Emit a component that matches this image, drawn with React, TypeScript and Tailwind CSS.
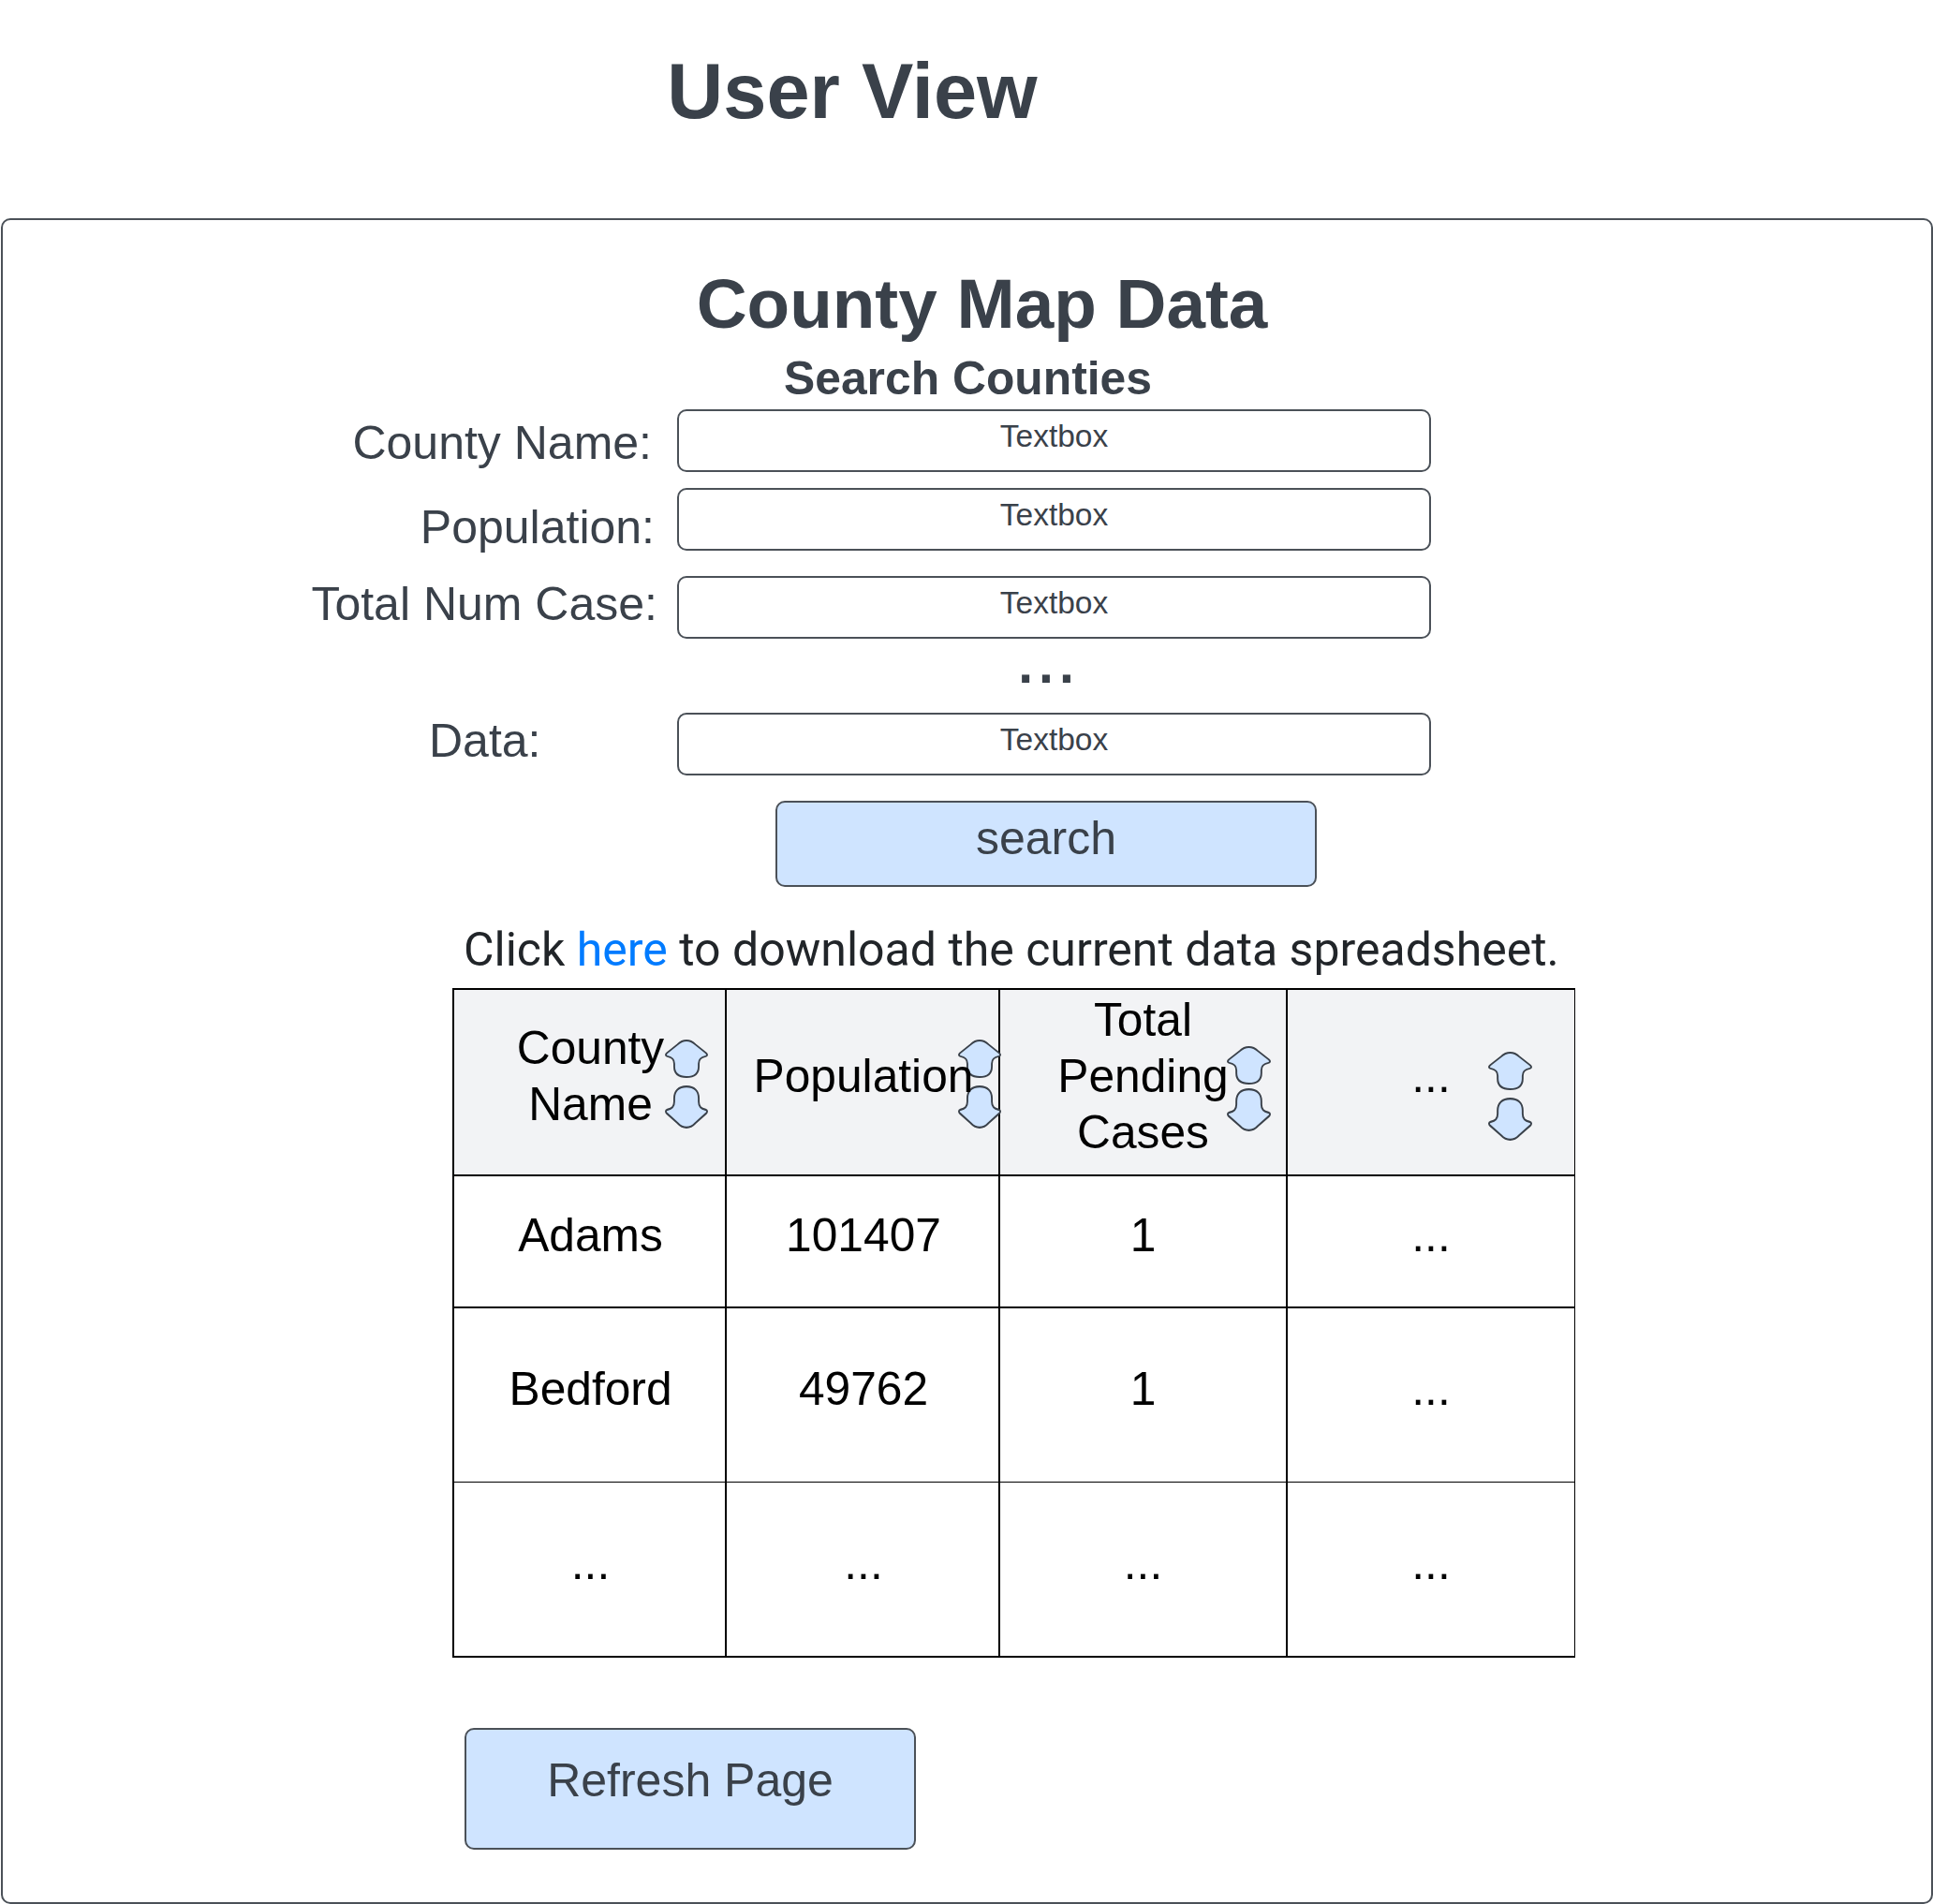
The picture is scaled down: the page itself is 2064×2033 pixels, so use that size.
import React from 'react';

// arrow shape used in the sort controls of the table header
function SortArrow({ down = false, className = '' }: { down?: boolean; className?: string }) {
  return (
    <svg
      viewBox="0 0 44 40"
      preserveAspectRatio="none"
      className={`absolute ${down ? '-scale-y-100' : ''} ${className}`}
    >
      <path
        d="M22 1C26 1 29 3 31 5L42 14C43.5 15.5 43.5 17 41.5 17.5C37 18.5 34.5 20 34.5 25V28C34.5 35 30 39 22 39C14 39 9.5 35 9.5 28V25C9.5 20 7 18.5 2.5 17.5C.5 17 .5 15.5 2 14L13 5C15 3 18 1 22 1Z"
        fill="#cfe4ff"
        stroke="#3a414a"
        strokeWidth="1.8"
      />
    </svg>
  );
}

function Field({ label, labelClass }: { label: string; labelClass: string }) {
  return (
    <div className="flex items-start h-[67px]">
      <div className={`w-[720px] shrink-0 text-[50px] leading-[60px] text-[#3a414a] ${labelClass}`}>{label}</div>
      <div className="w-[805px] h-[67px] box-border border-2 border-[#4b5158] rounded-[10px] bg-white text-center text-[33.5px] leading-[53px] text-[#3a414a]">
        Textbox
      </div>
    </div>
  );
}

const rows = [
  { h: 'h-[141px]', cells: ['Adams', '101407', '1', '...'], border: 'border-b-2' },
  { h: 'h-[186px]', cells: ['Bedford', '49762', '1', '...'], border: 'border-b' },
  { h: 'h-[187px]', cells: ['...', '...', '...', '...'], border: 'border-b-2' },
];

const colW = ['w-[291px]', 'w-[292px]', 'w-[307px]', 'w-[306px]'];

export default function App() {
  return (
    <div className="w-[2064px] h-[2033px] overflow-hidden bg-white font-['Liberation_Sans',sans-serif]">
      <div className="h-[233px] pl-[32px] pt-[45px]">
        <h1 className="w-[1756px] text-center text-[83px] leading-[106px] font-bold text-[#3a414a]">User View</h1>
      </div>

      <div className="ml-px w-[2063px] h-[1800px] box-border border-2 border-[#4b5158] rounded-[10px]">
        <h2 className="pl-[32px] pt-[39px] text-center text-[74.67px] leading-[100px] font-bold text-[#3a414a]">County Map Data</h2>
        <h3 className="pl-[2px] text-center text-[49.8px] leading-[60px] font-bold text-[#3a414a]">Search Counties</h3>

        <div className="mt-[3px]">
          <Field label="County Name:" labelClass="pr-[27px] text-right pt-[6px]" />
          <div className="h-[17px]" />
          <Field label="Population:" labelClass="pr-[24px] text-right pt-[12px]" />
          <div className="h-[27px]" />
          <Field label="Total Num Case:" labelClass="pr-[21px] text-right" />
          <div className="h-[79px] pl-[720px]">
            <div className="w-[794px] text-center text-[57px] leading-[54px] font-bold text-[#3a414a] tracking-[6px]">...</div>
          </div>
          <Field label="Data:" labelClass="pl-[455px]" />
        </div>

        <button className="block mt-[27px] ml-[825px] w-[578px] h-[92px] box-border border-2 border-[#4b5158] rounded-[10px] bg-[#cfe4ff] text-[50px] leading-[74px] pb-[12px] text-[#3a414a]">
          search
        </button>

        <p className="mt-[35px] mb-[9px] ml-[492px] h-[64px] font-['Roboto',sans-serif] text-[50px] leading-[64px] text-[#212529] whitespace-nowrap">
          Click <span className="text-[#007bff]">here</span> to download the current data spreadsheet.
        </p>

        <div className="ml-[480px] w-[1199px] border-t-2 border-l-2 border-r border-black text-[49.7px] leading-[60px] text-black text-center">
          <div className="flex h-[199px] bg-[#f2f3f5] border-b-2 border-black">
            <div className={`${colW[0]} relative border-r-2 border-black pt-[32px] pl-[2px]`}>
              <SortArrow className="left-[225px] top-[53px] w-[46px] h-[41px]" />
              <SortArrow down className="left-[225px] top-[102px] w-[46px] h-[46px]" />
              <div className="relative">County<br />Name</div>
            </div>
            <div className={`${colW[1]} relative border-r-2 border-black pt-[62px] pl-[2px]`}>
              <SortArrow className="left-[247px] top-[53px] w-[46px] h-[41px]" />
              <SortArrow down className="left-[247px] top-[102px] w-[46px] h-[46px]" />
              <div className="relative">Population</div>
            </div>
            <div className={`${colW[2]} relative border-r-2 border-black pt-[2px]`}>
              <SortArrow className="left-[242px] top-[60px] w-[47px] h-[41px]" />
              <SortArrow down className="left-[242px] top-[105px] w-[47px] h-[46px]" />
              <div className="relative">Total<br />Pending<br />Cases</div>
            </div>
            <div className={`${colW[3]} relative pt-[62px]`}>
              <SortArrow className="left-[214px] top-[66px] w-[47px] h-[41px]" />
              <SortArrow down className="left-[214px] top-[115px] w-[47px] h-[46px]" />
              <div className="relative">...</div>
            </div>
          </div>
          {rows.map(r => (
            <div key={r.cells[0] + r.h} className={`flex ${r.h} ${r.border} border-black box-border`}>
              {r.cells.map((c, i) => (
                <div key={i} className={`${colW[i]} ${i < 3 ? 'border-r-2' : ''} ${i < 2 ? 'pl-[2px]' : ''} border-black flex items-center justify-center pb-[13px]`}>
                  {c}
                </div>
              ))}
            </div>
          ))}
        </div>

        <button className="block mt-[75px] ml-[493px] w-[482px] h-[130px] box-border border-2 border-[#4b5158] rounded-[10px] bg-[#cfe4ff] text-[50px] leading-[60px] pb-[18px] text-[#3a414a]">
          Refresh Page
        </button>
      </div>
    </div>
  );
}
